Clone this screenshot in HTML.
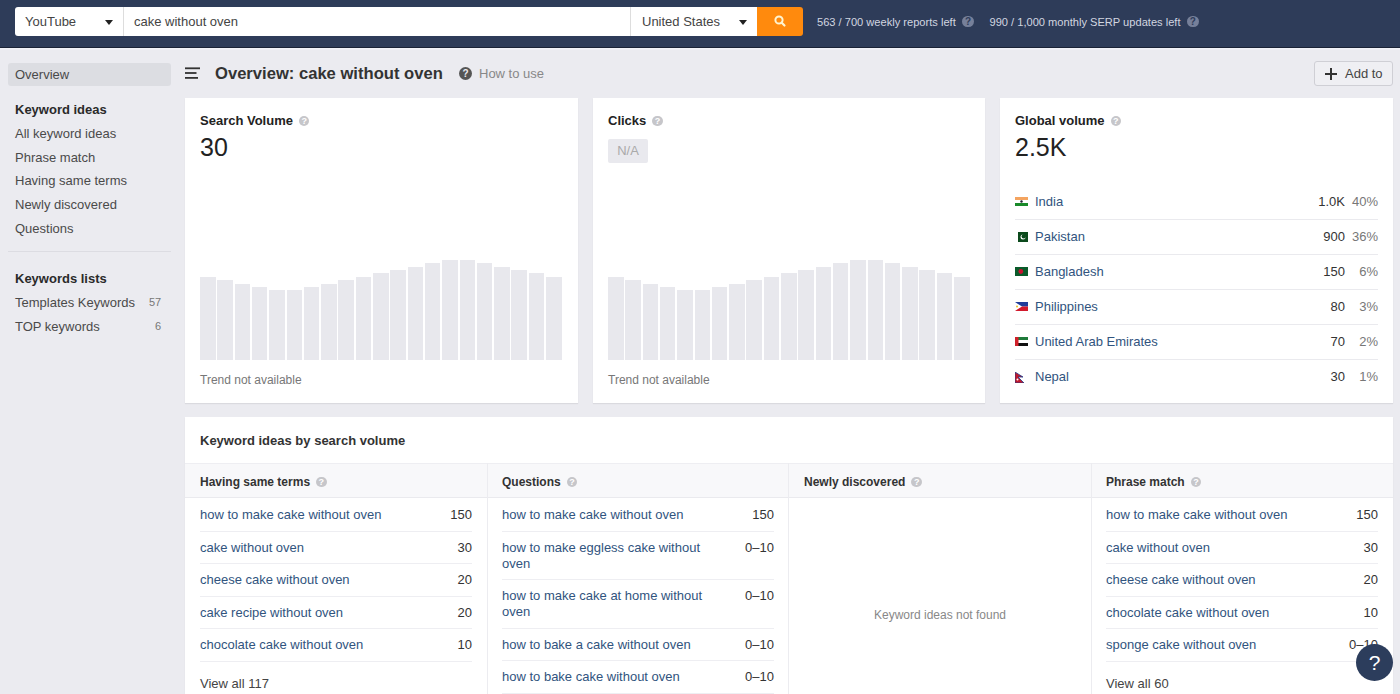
<!DOCTYPE html>
<html><head><meta charset="utf-8">
<style>
*{box-sizing:border-box;margin:0;padding:0}
html,body{width:1400px;height:694px;overflow:hidden}
body{background:#ebebf0;font-family:"Liberation Sans",sans-serif;color:#333;position:relative;font-size:13px}
.abs{position:absolute}
#hdr{position:absolute;left:0;top:0;width:1400px;height:48px;background:#2e3c59;border-bottom:1px solid #1a2236;box-shadow:0 1.5px 0 #f1f2f8}
.ig{position:absolute;top:7px;height:29px;background:#fff}
.ig span{position:absolute;top:7px;font-size:13px;color:#444;white-space:nowrap}
.tri{position:absolute;width:0;height:0;border-left:4.5px solid transparent;border-right:4.5px solid transparent;border-top:5px solid #222}
.hq{position:absolute;width:11.5px;height:11.5px;border-radius:50%;background:#76809a;color:#2e3c59;font-size:10px;font-weight:bold;text-align:center;line-height:11.5px}
.htxt{position:absolute;top:15.5px;font-size:11.1px;color:#d2d6e0;white-space:nowrap}
.side{position:absolute;left:15px;font-size:13px;color:#4a4a4a;white-space:nowrap}
.sideb{position:absolute;left:15px;font-size:13px;color:#2a2a2a;font-weight:bold;white-space:nowrap}
.cnt{position:absolute;font-size:11px;color:#777}
.card{position:absolute;background:#fff;box-shadow:0 1px 1px rgba(0,0,0,0.07)}
.ct{position:absolute;left:15px;top:15px;font-size:13px;font-weight:bold;color:#222;white-space:nowrap}
.q{display:inline-block;width:10.5px;height:10.5px;border-radius:50%;background:#c6c6ca;color:#fff;font-size:9px;font-weight:bold;text-align:center;line-height:10.5px;vertical-align:1.5px;margin-left:6px}
.big{position:absolute;left:15px;font-size:25px;color:#222}
.bars{position:absolute;left:15px;top:162px;width:362px;height:100px}
.bars i{position:absolute;bottom:0;width:15.4px;background:#e8e8ed}
.tna{position:absolute;left:15px;top:275px;font-size:12px;color:#777}
.crow{position:absolute;left:15px;width:363px;height:35px}
.crow .nm{position:absolute;left:20px;top:1px;font-size:13px;color:#31547e}
.crow .v{position:absolute;right:33px;top:1px;font-size:13px;color:#333}
.crow .p{position:absolute;right:0;top:1px;font-size:13px;color:#777}
.crow .ln{position:absolute;left:0;right:0;top:26px;height:1px;background:#eaeaee}
.flag{position:absolute;left:0;top:0}
.kh{position:absolute;top:58px;font-size:12px;font-weight:bold;color:#333;white-space:nowrap}
.kr{position:absolute;width:272px;border-bottom:1px solid #eeeef2}
.kr a{position:absolute;left:0;top:8px;font-size:13px;line-height:16px;color:#31547e;white-space:nowrap}
.kr b{position:absolute;right:0;top:8px;font-size:13px;line-height:16px;color:#333;font-weight:normal}
.va{position:absolute;font-size:13px;color:#444}
</style></head><body>
<div id="hdr">
  <div class="ig" style="left:15px;width:108px;border-radius:3px 0 0 3px"><span style="left:10px">YouTube</span><div class="tri" style="left:90px;top:13px"></div></div>
  <div class="ig" style="left:123px;width:507px;border-left:1px solid #ddd"><span style="left:10px">cake without oven</span></div>
  <div class="ig" style="left:630px;width:127px;border-left:1px solid #ddd"><span style="left:11px">United States</span><div class="tri" style="left:108px;top:13px"></div></div>
  <div class="ig" style="left:757px;width:46px;background:#ff8a0d;border-radius:0 3px 3px 0">
    <svg class="abs" style="left:16px;top:7.3px" width="14" height="14" viewBox="0 0 14 14"><circle cx="6" cy="6" r="3.6" fill="none" stroke="#fff4d0" stroke-width="2"/><line x1="8.5" y1="8.5" x2="11.5" y2="11.5" stroke="#fff4d0" stroke-width="2.2" stroke-linecap="round"/></svg>
  </div>
  <div class="htxt" style="left:817px">563 / 700 weekly reports left</div><div class="hq" style="left:962.3px;top:15.7px">?</div>
  <div class="htxt" style="left:989.5px">990 / 1,000 monthly SERP updates left</div><div class="hq" style="left:1187px;top:15.5px">?</div>
</div>

<!-- sidebar -->
<div class="abs" style="left:8px;top:63px;width:163px;height:23px;background:#dcdde2;border-radius:3px"></div>
<div class="side" style="top:67px">Overview</div>
<div class="sideb" style="top:102px">Keyword ideas</div>
<div class="side" style="top:126px">All keyword ideas</div>
<div class="side" style="top:150px">Phrase match</div>
<div class="side" style="top:173px">Having same terms</div>
<div class="side" style="top:197px">Newly discovered</div>
<div class="side" style="top:221px">Questions</div>
<div class="abs" style="left:8px;top:251px;width:163px;height:1px;background:#dcdce2"></div>
<div class="sideb" style="top:271px">Keywords lists</div>
<div class="side" style="top:295px">Templates Keywords</div>
<div class="cnt" style="left:149px;top:296px">57</div>
<div class="side" style="top:319px">TOP keywords</div>
<div class="cnt" style="left:155px;top:320px">6</div>

<!-- title -->
<svg class="abs" style="left:185px;top:67px" width="16" height="13" viewBox="0 0 16 13"><rect x="0" y="0.4" width="15" height="1.8" fill="#333"/><rect x="0" y="5.1" width="11.5" height="1.8" fill="#333"/><rect x="0" y="10" width="13" height="1.8" fill="#333"/></svg>
<div class="abs" style="left:215px;top:64px;font-size:16.6px;font-weight:bold;color:#333;white-space:nowrap">Overview: cake without oven</div>
<div class="abs" style="left:459px;top:67px;width:13px;height:13px;border-radius:50%;background:#555;color:#ebebf0;font-size:10px;font-weight:bold;text-align:center;line-height:13px">?</div>
<div class="abs" style="left:479px;top:66px;font-size:13px;color:#888;white-space:nowrap">How to use</div>
<div class="abs" style="left:1314px;top:61px;width:79px;height:25px;border:1px solid #cfcfd5;border-radius:3px;background:#efeff3">
  <svg class="abs" style="left:10px;top:6px" width="12" height="12" viewBox="0 0 12 12"><rect x="5" y="0" width="2" height="12" fill="#333"/><rect x="0" y="5" width="12" height="2" fill="#333"/></svg>
  <span class="abs" style="left:30px;top:4px;font-size:13px;color:#444">Add to</span>
</div>

<!-- cards -->
<div class="card" style="left:185px;top:98px;width:393px;height:305px">
  <div class="ct">Search Volume<span class="q">?</span></div>
  <div class="big" style="top:35px">30</div>
  <div class="bars" id="b1"><i style="left:0.00px;height:83.4px;width:15.50px"></i><i style="left:17.30px;height:80.4px;width:15.50px"></i><i style="left:34.60px;height:76.5px;width:15.50px"></i><i style="left:51.90px;height:73.2px;width:15.50px"></i><i style="left:69.20px;height:69.9px;width:15.50px"></i><i style="left:86.50px;height:69.9px;width:15.50px"></i><i style="left:103.80px;height:73.2px;width:15.50px"></i><i style="left:121.10px;height:76.5px;width:15.50px"></i><i style="left:138.40px;height:80.4px;width:15.50px"></i><i style="left:155.70px;height:83.4px;width:15.50px"></i><i style="left:173.00px;height:86.7px;width:15.50px"></i><i style="left:190.30px;height:90.3px;width:15.50px"></i><i style="left:207.60px;height:93.3px;width:15.50px"></i><i style="left:224.90px;height:96.6px;width:15.50px"></i><i style="left:242.20px;height:100.2px;width:15.50px"></i><i style="left:259.50px;height:100.2px;width:15.50px"></i><i style="left:276.80px;height:96.6px;width:15.50px"></i><i style="left:294.10px;height:93.3px;width:15.50px"></i><i style="left:311.40px;height:90.3px;width:15.50px"></i><i style="left:328.70px;height:86.7px;width:15.50px"></i><i style="left:346.00px;height:83.4px;width:15.50px"></i></div>
  <div class="tna">Trend not available</div>
</div>
<div class="card" style="left:593px;top:98px;width:392px;height:305px">
  <div class="ct">Clicks<span class="q">?</span></div>
  <div class="abs" style="left:15px;top:41px;width:40px;height:24px;background:#e9e9ee;border-radius:2px;color:#aaa;font-size:13px;text-align:center;line-height:24px">N/A</div>
  <div class="bars" id="b2"><i style="left:0.00px;height:83.4px;width:15.50px"></i><i style="left:17.30px;height:80.4px;width:15.50px"></i><i style="left:34.60px;height:76.5px;width:15.50px"></i><i style="left:51.90px;height:73.2px;width:15.50px"></i><i style="left:69.20px;height:69.9px;width:15.50px"></i><i style="left:86.50px;height:69.9px;width:15.50px"></i><i style="left:103.80px;height:73.2px;width:15.50px"></i><i style="left:121.10px;height:76.5px;width:15.50px"></i><i style="left:138.40px;height:80.4px;width:15.50px"></i><i style="left:155.70px;height:83.4px;width:15.50px"></i><i style="left:173.00px;height:86.7px;width:15.50px"></i><i style="left:190.30px;height:90.3px;width:15.50px"></i><i style="left:207.60px;height:93.3px;width:15.50px"></i><i style="left:224.90px;height:96.6px;width:15.50px"></i><i style="left:242.20px;height:100.2px;width:15.50px"></i><i style="left:259.50px;height:100.2px;width:15.50px"></i><i style="left:276.80px;height:96.6px;width:15.50px"></i><i style="left:294.10px;height:93.3px;width:15.50px"></i><i style="left:311.40px;height:90.3px;width:15.50px"></i><i style="left:328.70px;height:86.7px;width:15.50px"></i><i style="left:346.00px;height:83.4px;width:15.50px"></i></div>
  <div class="tna">Trend not available</div>
</div>
<div class="card" style="left:1000px;top:98px;width:393px;height:305px">
  <div class="ct">Global volume<span class="q">?</span></div>
  <div class="big" style="top:35px">2.5K</div>
  <div id="countries">
<div class="crow" style="top:95px"><div class="fl" style="position:absolute;left:0;top:4px"><svg class="flag" width="13" height="9" viewBox="0 0 13 9"><rect width="13" height="3" fill="#f4a460"/><rect y="3" width="13" height="3" fill="#fff"/><rect y="6" width="13" height="3" fill="#1a8a2a"/><circle cx="6.5" cy="4.5" r="1.2" fill="#223"/></svg></div><div class="nm">India</div><div class="v">1.0K</div><div class="p">40%</div><div class="ln"></div></div>
<div class="crow" style="top:130px"><div class="fl" style="position:absolute;left:0;top:4px"><svg class="flag" width="13" height="10" viewBox="0 0 13 10"><rect width="13" height="10" fill="#0b4a1c"/><rect width="3" height="10" fill="#fff"/><circle cx="8" cy="5" r="2.5" fill="#fff"/><circle cx="8.8" cy="4.3" r="2.2" fill="#0b4a1c"/></svg></div><div class="nm">Pakistan</div><div class="v">900</div><div class="p">36%</div><div class="ln"></div></div>
<div class="crow" style="top:165px"><div class="fl" style="position:absolute;left:0;top:4px"><svg class="flag" width="13" height="9" viewBox="0 0 13 9"><rect width="13" height="9" fill="#0a5a2a"/><circle cx="5.8" cy="4.5" r="2.4" fill="#c8102e"/></svg></div><div class="nm">Bangladesh</div><div class="v">150</div><div class="p">6%</div><div class="ln"></div></div>
<div class="crow" style="top:200px"><div class="fl" style="position:absolute;left:0;top:4px"><svg class="flag" width="13" height="9" viewBox="0 0 13 9"><rect width="13" height="4.5" fill="#1f3c9a"/><rect y="4.5" width="13" height="4.5" fill="#d21a2c"/><polygon points="0,0 7,4.5 0,9" fill="#fff"/><circle cx="2" cy="4.5" r="1" fill="#e8c020"/></svg></div><div class="nm">Philippines</div><div class="v">80</div><div class="p">3%</div><div class="ln"></div></div>
<div class="crow" style="top:235px"><div class="fl" style="position:absolute;left:0;top:4px"><svg class="flag" width="13" height="9" viewBox="0 0 13 9"><rect width="13" height="3" fill="#1e7a3a"/><rect y="3" width="13" height="3" fill="#fff"/><rect y="6" width="13" height="3" fill="#111"/><rect width="3.5" height="9" fill="#d0202a"/></svg></div><div class="nm">United Arab Emirates</div><div class="v">70</div><div class="p">2%</div><div class="ln"></div></div>
<div class="crow" style="top:270px"><div class="fl" style="position:absolute;left:0;top:4px"><svg class="flag" width="13" height="11" viewBox="0 0 13 11"><polygon points="0,0 8,5 3,5 9,11 0,11" fill="#c0182c" stroke="#1a3a8a" stroke-width="0.8"/><circle cx="2.5" cy="7.5" r="1" fill="#fff"/></svg></div><div class="nm">Nepal</div><div class="v">30</div><div class="p">1%</div></div>
</div>
</div>

<!-- keyword ideas panel -->
<div class="card" style="left:185px;top:417px;width:1208px;height:300px" id="panel">
  <div class="abs" style="left:15px;top:16px;font-size:13px;font-weight:bold;color:#333;white-space:nowrap">Keyword ideas by search volume</div>
<div class="abs" style="left:0;top:46px;width:1208px;height:35px;background:#f8f8fa;border-top:1px solid #eeeef2;border-bottom:1px solid #eaeaee"></div>
<div class="kh" style="left:15px">Having same terms<span class="q">?</span></div>
<div class="kr" style="left:15px;top:82.0px;height:32.5px"><a>how to make cake without oven</a><b>150</b></div>
<div class="kr" style="left:15px;top:114.5px;height:32.5px"><a>cake without oven</a><b>30</b></div>
<div class="kr" style="left:15px;top:147.0px;height:32.5px"><a>cheese cake without oven</a><b>20</b></div>
<div class="kr" style="left:15px;top:179.5px;height:32.5px"><a>cake recipe without oven</a><b>20</b></div>
<div class="kr" style="left:15px;top:212.0px;height:32.5px"><a>chocolate cake without oven</a><b>10</b></div>
<div class="va" style="left:15px;top:258.5px">View all 117</div>
<div class="abs" style="left:302px;top:46px;width:1px;height:300px;background:#ececf0"></div>
<div class="kh" style="left:317px">Questions<span class="q">?</span></div>
<div class="kr" style="left:317px;top:82.0px;height:32.5px"><a>how to make cake without oven</a><b>150</b></div>
<div class="kr" style="left:317px;top:114.5px;height:48.5px"><a>how to make eggless cake without<br>oven</a><b>0–10</b></div>
<div class="kr" style="left:317px;top:163.0px;height:48.5px"><a>how to make cake at home without<br>oven</a><b>0–10</b></div>
<div class="kr" style="left:317px;top:211.5px;height:32.5px"><a>how to bake a cake without oven</a><b>0–10</b></div>
<div class="kr" style="left:317px;top:244.0px;height:32.5px"><a>how to bake cake without oven</a><b>0–10</b></div>
<div class="abs" style="left:603px;top:46px;width:1px;height:300px;background:#ececf0"></div>
<div class="kh" style="left:619px">Newly discovered<span class="q">?</span></div>
<div class="abs" style="left:906px;top:46px;width:1px;height:300px;background:#ececf0"></div>
<div class="kh" style="left:921px">Phrase match<span class="q">?</span></div>
<div class="kr" style="left:921px;top:82.0px;height:32.5px"><a>how to make cake without oven</a><b>150</b></div>
<div class="kr" style="left:921px;top:114.5px;height:32.5px"><a>cake without oven</a><b>30</b></div>
<div class="kr" style="left:921px;top:147.0px;height:32.5px"><a>cheese cake without oven</a><b>20</b></div>
<div class="kr" style="left:921px;top:179.5px;height:32.5px"><a>chocolate cake without oven</a><b>10</b></div>
<div class="kr" style="left:921px;top:212.0px;height:32.5px"><a>sponge cake without oven</a><b>0–10</b></div>
<div class="va" style="left:921px;top:258.5px">View all 60</div>
<div class="abs" style="left:604px;top:191px;width:302px;text-align:center;font-size:12px;color:#888">Keyword ideas not found</div>
</div>
<div class="abs" style="left:1356px;top:644px;width:37px;height:37px;border-radius:50%;background:#2c3d5c;color:#fff;font-size:21px;font-weight:normal;text-align:center;line-height:37px">?</div>
</body></html>
